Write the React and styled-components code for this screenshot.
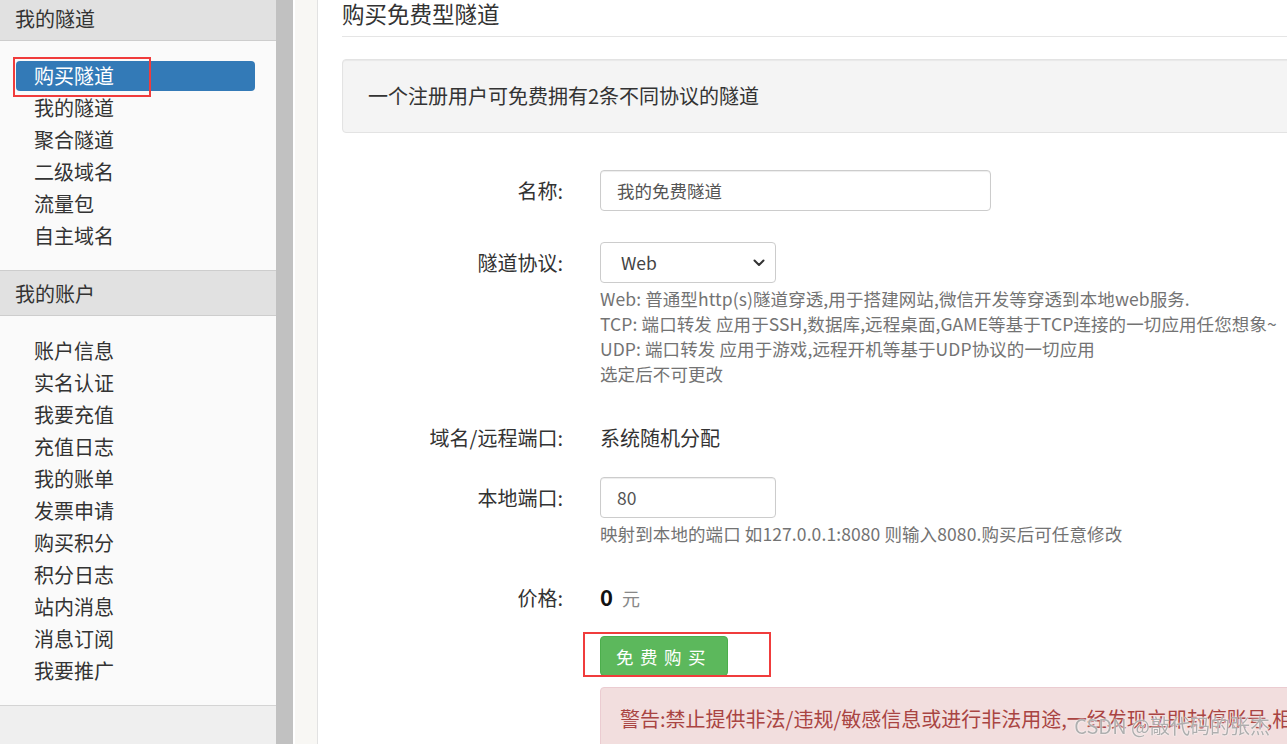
import React from 'react';
import styled, { createGlobalStyle } from 'styled-components';

const GlobalStyle = createGlobalStyle`
  html, body {
    margin: 0;
    padding: 0;
    overflow: hidden;
    background: #fff;
  }

  body {
    font-family: "Noto Sans CJK SC", "Noto Sans", sans-serif;
    color: #333;
  }
`;

const Page = styled.div`
  display: flex;
  height: 760px;
  margin-top: -5px;
`;

const Sidebar = styled.aside`
  flex: none;
  width: 276px;
  background: #efefef;
`;

const Panel = styled.div`
  background: #fafafa;
  border-bottom: 1px solid #d4d4d4;
`;

const SectionHeader = styled.div`
  display: flex;
  align-items: center;
  height: 44px;
  padding-left: 15px;
  background: #e1e1e1;
  border-top: 1px solid #cdcdcd;
  border-bottom: 1px solid #cdcdcd;
  font-size: 20px;
  color: #333;
`;

const NavList = styled.ul`
  list-style: none;
  margin: 0;
  padding: 20px 21px 17px 16px;
`;

const NavItem = styled.li`
  position: relative;
  height: 30px;
  line-height: 30px;
  margin-bottom: 2px;
  padding-left: 18px;
  border-radius: 4px;
  font-size: 20px;
  color: ${(p) => (p.$active ? '#fff' : '#333')};
  background: ${(p) => (p.$active ? '#337ab7' : 'transparent')};
`;

const Divider = styled.div`
  flex: none;
  width: 17px;
  background: #c1c1c1;
`;

const Gutter = styled.div`
  flex: none;
  width: 22px;
  background: #f8f7f4;
  border-left: 2px solid #fff;
  border-right: 1px solid #e2e2e2;
`;

const Main = styled.main`
  flex: 1;
  margin-right: -90px;
  padding: 5px 0 0 24px;
  background: #fff;
`;

const Title = styled.h1`
  margin: 0;
  padding-bottom: 9px;
  border-bottom: 1px solid #e5e5e5;
  font-size: 22.5px;
  font-weight: normal;
  line-height: 27px;
  color: #333;
`;

const Well = styled.div`
  margin-top: 22px;
  padding: 24px 25px;
  background: #f4f4f4;
  border: 1px solid #e3e3e3;
  border-radius: 4px;
  box-shadow: inset 0 1px 1px rgba(0, 0, 0, 0.05);
  font-size: 20px;
  line-height: 24px;
`;

const FormRow = styled.div`
  display: grid;
  grid-template-columns: 221px 1fr;
  column-gap: 37px;
  margin-top: ${(p) => p.$gap}px;
`;

const Label = styled.label`
  height: 41px;
  text-align: right;
  font-size: 20px;
  line-height: 41px;
  color: #333;
`;

const Input = styled.input`
  display: block;
  box-sizing: border-box;
  width: ${(p) => p.$width}px;
  height: 41px;
  padding: 0 16px;
  border: 1px solid #ccc;
  border-radius: 4px;
  box-shadow: inset 0 1px 1px rgba(0, 0, 0, 0.075);
  font-family: inherit;
  font-size: 17.5px;
  color: #555;
  outline: none;
`;

const SelectBox = styled.div`
  display: flex;
  align-items: center;
  justify-content: space-between;
  box-sizing: border-box;
  width: 176px;
  height: 41px;
  padding: 0 10px 0 20px;
  border: 1px solid #ccc;
  border-radius: 4px;
  font-size: 17.5px;
  color: #444;
`;

const Help = styled.div`
  margin-top: 3px;
  font-size: 17.5px;
  line-height: 25px;
  letter-spacing: 0.1px;
  color: #737373;
  white-space: nowrap;
`;

const Static = styled.div`
  font-size: 20px;
  line-height: 41px;
  color: #333;
`;

const Price = styled.div`
  display: flex;
  align-items: baseline;
  gap: 9px;
  line-height: 38px;
`;

const Amount = styled.span`
  font-size: 22px;
  font-weight: bold;
  color: #111;
`;

const Unit = styled.span`
  font-size: 18px;
  color: #888;
`;

const ButtonWrap = styled.div`
  position: relative;
  width: max-content;
`;

const Button = styled.button`
  height: 40px;
  padding: 0 15px;
  background: #5cb85c;
  border: 1px solid #4cae4c;
  border-radius: 4px;
  font-family: inherit;
  font-size: 17.5px;
  letter-spacing: 6.5px;
  color: #fff;
`;

const Annotation = styled.span`
  position: absolute;
  left: ${(p) => p.$left}px;
  top: ${(p) => p.$top}px;
  width: ${(p) => p.$width}px;
  height: ${(p) => p.$height}px;
  box-sizing: border-box;
  border: 2px solid #f03c3c;
  pointer-events: none;
`;

const Alert = styled.div`
  margin-top: 11px;
  padding: 19px;
  background: #f2dede;
  border: 1px solid #ebccd1;
  border-radius: 4px;
  font-size: 20px;
  line-height: 24px;
  color: #a94442;
  white-space: nowrap;
  overflow: hidden;
`;

const Watermark = styled.div`
  position: fixed;
  right: 17px;
  bottom: 8px;
  font-size: 20px;
  line-height: 20px;
  color: rgba(110, 110, 110, 0.55);
  text-shadow: 0 0 2px #fff, 0 0 1px #fff;
  pointer-events: none;
`;

const tunnelMenu = ['购买隧道', '我的隧道', '聚合隧道', '二级域名', '流量包', '自主域名'];
const accountMenu = [
  '账户信息', '实名认证', '我要充值', '充值日志', '我的账单', '发票申请',
  '购买积分', '积分日志', '站内消息', '消息订阅', '我要推广',
];

const Chevron = () => (
  <svg width="12" height="8" viewBox="0 0 12 8" fill="none">
    <path d="M1.5 1.5L6 6l4.5-4.5" stroke="#333" strokeWidth="2" strokeLinecap="round" strokeLinejoin="round" />
  </svg>
);

const App = () => (
  <>
    <GlobalStyle />
    <Page>
      <Sidebar>
        <Panel>
          <SectionHeader>我的隧道</SectionHeader>
          <NavList>
            {tunnelMenu.map((item, i) => (
              <NavItem key={item} $active={i === 0}>
                {item}
                {i === 0 && <Annotation $left={-3} $top={-4} $width={138} $height={40} />}
              </NavItem>
            ))}
          </NavList>
          <SectionHeader>我的账户</SectionHeader>
          <NavList>
            {accountMenu.map((item) => (
              <NavItem key={item}>{item}</NavItem>
            ))}
          </NavList>
        </Panel>
      </Sidebar>
      <Divider />
      <Gutter />
      <Main>
        <Title>购买免费型隧道</Title>
        <Well>一个注册用户可免费拥有2条不同协议的隧道</Well>

        <FormRow $gap={37}>
          <Label>名称:</Label>
          <Input $width={391} defaultValue="我的免费隧道" />
        </FormRow>

        <FormRow $gap={31}>
          <Label>隧道协议:</Label>
          <div>
            <SelectBox>
              <span>Web</span>
              <Chevron />
            </SelectBox>
            <Help>
              Web: 普通型http(s)隧道穿透,用于搭建网站,微信开发等穿透到本地web服务.
              <br />
              TCP: 端口转发 应用于SSH,数据库,远程桌面,GAME等基于TCP连接的一切应用任您想象~
              <br />
              UDP: 端口转发 应用于游戏,远程开机等基于UDP协议的一切应用
              <br />
              选定后不可更改
            </Help>
          </div>
        </FormRow>

        <FormRow $gap={31}>
          <Label>域名/远程端口:</Label>
          <Static>系统随机分配</Static>
        </FormRow>

        <FormRow $gap={19}>
          <Label>本地端口:</Label>
          <div>
            <Input $width={176} defaultValue="80" />
            <Help>映射到本地的端口 如127.0.0.1:8080 则输入8080.购买后可任意修改</Help>
          </div>
        </FormRow>

        <FormRow $gap={31}>
          <Label>价格:</Label>
          <Price>
            <Amount>0</Amount>
            <Unit>元</Unit>
          </Price>
        </FormRow>

        <FormRow $gap={18}>
          <span />
          <div>
            <ButtonWrap>
              <Button type="button">免费购买</Button>
              <Annotation $left={-17} $top={-4} $width={188} $height={45} />
            </ButtonWrap>
            <Alert>警告:禁止提供非法/违规/敏感信息或进行非法用途,一经发现立即封停账号,相关信息将提交公安机关处理</Alert>
          </div>
        </FormRow>
      </Main>
    </Page>
    <Watermark>CSDN @敲代码的张杰</Watermark>
  </>
);

export default App;
